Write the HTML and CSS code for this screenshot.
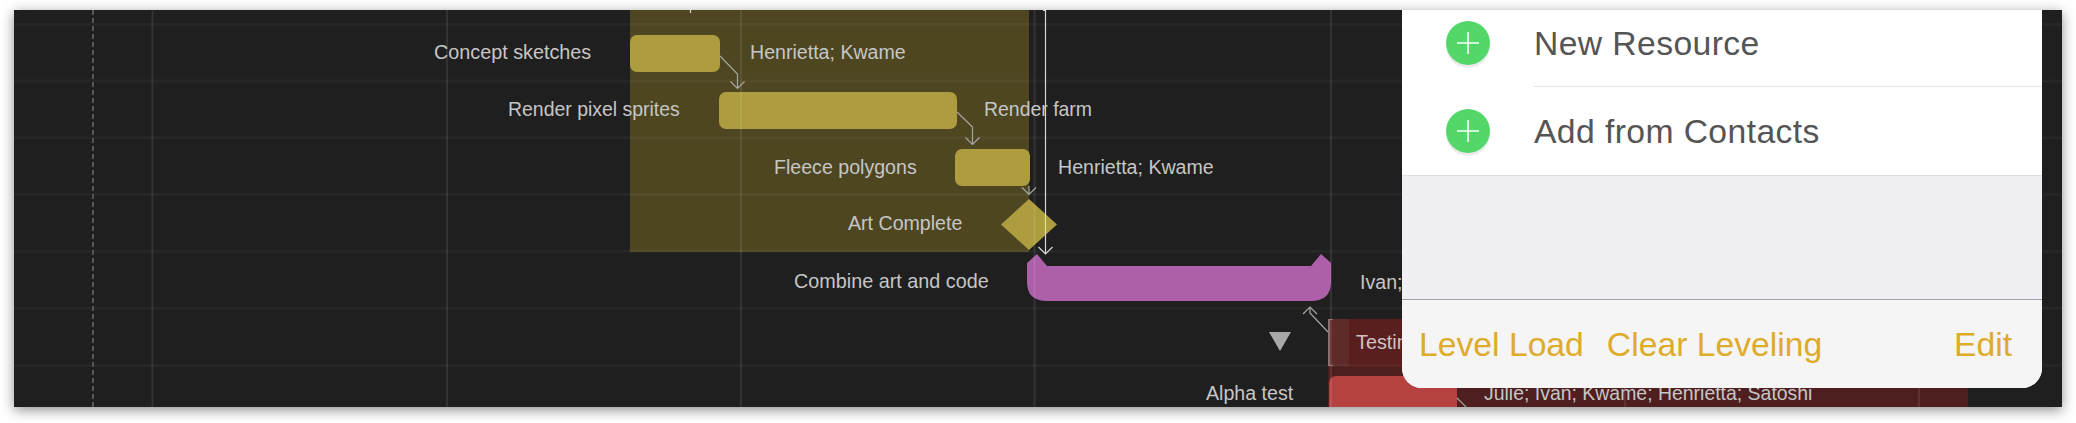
FILE: index.html

```html
<!DOCTYPE html>
<html>
<head>
    <title>Resources</title>
    <link rel="stylesheet" href="styles.css">
</head>
<body>
    <div class="gantt">
        <div class="band"></div>

        <div class="task-row testing-row"></div>
        <div class="bar concept"></div>
        <div class="bar render"></div>
        <div class="bar fleece"></div>
        <div class="bar testing"><span class="testing-cap"></span><span class="testing-text">Testing</span></div>
        <div class="bar alpha"></div>

        <svg class="lines" viewBox="14 10 2048 397" width="2048" height="397">
            <!-- milestone + group shapes -->
            <polygon class="milestone" points="1001,224.5 1029,199 1057,224.5 1029,250"/>
            <path class="group" d="M1027 263 L1037 254 L1047 266 L1311 266 L1321 254 L1331 263 L1331 282 Q1331 301 1311 301 L1047 301 Q1027 301 1027 282 Z"/>
            <polygon class="collapse" points="1269,332 1291,332 1280,351"/>

            <!-- grid -->
            <path class="grid" d="M14 24.5H2062 M14 81H2062 M14 137.8H2062 M14 194.5H2062 M14 251.3H2062 M14 308.3H2062 M14 365.5H2062"/>
            <path class="grid-v" d="M152.5 10V407 M447 10V407 M741 10V407 M1034.5 10V407 M1331 10V407 M1625 10V407 M1919 10V407"/>
            <path class="today" d="M93 10V407"/>

            <!-- dependency arrows -->
            <path class="arrow" d="M720 56 L737.5 74 V88 M730.5 81.5 L737.5 88.5 L744.5 81.5"/>
            <path class="arrow" d="M957 112 L972.5 127 V144 M965.5 137.5 L972.5 144.5 L979.5 137.5"/>
            <path class="arrow" d="M1029 186 V194 M1022 187.5 L1029 194.5 L1036 187.5"/>
            <path class="arrow bright" d="M1043 10.5 H1045.5 V253 M1038.5 247 L1045.5 254 L1052.5 247"/>
            <path class="arrow" d="M1328 332 L1310 313 V307 M1303 314 L1310 307 L1317 314"/>
            <path class="arrow" d="M1457 398 L1470 411"/>
            <path class="arrow bright" d="M690.5 10 V13"/>
        </svg>

        <span class="label lbl-concept">Concept sketches</span>
        <span class="label lbl-concept-who">Henrietta; Kwame</span>
        <span class="label lbl-render">Render pixel sprites</span>
        <span class="label lbl-render-who">Render farm</span>
        <span class="label lbl-fleece">Fleece polygons</span>
        <span class="label lbl-fleece-who">Henrietta; Kwame</span>
        <span class="label lbl-art">Art Complete</span>
        <span class="label lbl-combine">Combine art and code</span>
        <span class="label lbl-combine-who">Ivan; Julie</span>
        <span class="label lbl-alpha">Alpha test</span>
        <span class="label lbl-alpha-who">Julie; Ivan; Kwame; Henrietta; Satoshi</span>

        <div class="popup">
            <ul class="resource-list">
                <li class="resource-item">
                    <span class="add-btn"><svg viewBox="0 0 22 22" width="22" height="22"><path d="M11 0V22M0 11H22"/></svg></span>
                    <span class="resource-name">New Resource</span>
                </li>
                <li class="resource-item">
                    <span class="add-btn"><svg viewBox="0 0 22 22" width="22" height="22"><path d="M11 0V22M0 11H22"/></svg></span>
                    <span class="resource-name">Add from Contacts</span>
                </li>
            </ul>
            <div class="popup-empty"></div>
            <div class="popup-toolbar">
                <a class="tool">Level Load</a>
                <a class="tool">Clear Leveling</a>
                <a class="tool tool-edit">Edit</a>
            </div>
        </div>
    </div>
</body>
</html>
```

FILE: styles.css

```css
html, body {
    margin: 0;
    height: 423px;
    overflow: hidden;
    background-color: #fff;
}

body {
    padding: 10px 14px 0;
    box-sizing: border-box;
    font-family: "Liberation Sans", Arial, sans-serif;
}

/* everything in the chart sits on the time canvas, page coords minus 14/10 */
.gantt {
    position: relative;
    width: 2048px;
    height: 397px;
    overflow: hidden;
    background-color: #1f1f1f;
    box-shadow: 0 3px 12px rgba(0, 0, 0, 0.45);
}

.band {
    position: absolute;
    left: 616px;
    top: 0;
    width: 399px;
    height: 242px;
    background-color: #4d4621;
}

.bar {
    position: absolute;
    height: 37px;
    border-radius: 7px;
    background-color: #ae9d3e;
}

.concept { left: 616px; top: 25px; width: 90px; }
.render { left: 705px; top: 82px; width: 238px; }
.fleece { left: 941px; top: 139px; width: 75px; }

.task-row {
    position: absolute;
    background-color: #4f1e1e;
}

.testing-row {
    left: 1314px;
    top: 356px;
    width: 640px;
    height: 41px;
}

.testing {
    left: 1314px;
    top: 309px;
    width: 500px;
    height: 47px;
    border-radius: 0;
    background-color: #591e1e;
    border-left: 2px solid #8d6f6f;
    box-sizing: border-box;
}

.testing-cap {
    position: absolute;
    left: 0;
    top: 0;
    width: 19px;
    height: 47px;
    background-color: #5f2a2a;
}

.testing-cap::before {
    content: "";
    position: absolute;
    left: 0;
    top: 0;
    width: 3px;
    height: 45px;
    border-top: 1px solid #8d6f6f;
    border-bottom: 1px solid #8d6f6f;
}

.testing-text {
    position: absolute;
    left: 26px;
    top: 11px;
    font-size: 19.8px;
    line-height: 24px;
    color: #cfc4c4;
}

.alpha {
    left: 1315px;
    top: 366px;
    width: 128px;
    height: 48px;
    background-color: #b64141;
}

.lines {
    position: absolute;
    left: 0;
    top: 0;
}

.milestone { fill: #ae9d3e; }
.group { fill: #ad5fa9; }
.collapse { fill: #a8a8a8; }

.grid {
    fill: none;
    stroke: rgba(255, 255, 255, 0.035);
    stroke-width: 3;
}

.grid-v {
    fill: none;
    stroke: rgba(255, 255, 255, 0.09);
    stroke-width: 2;
}

.today {
    fill: none;
    stroke: #555;
    stroke-width: 2;
    stroke-dasharray: 5 3;
}

.arrow {
    fill: none;
    stroke: #a6a6a0;
    stroke-width: 1.2;
}

.arrow.bright {
    stroke: #d8d8d8;
}

.label {
    position: absolute;
    font-size: 19.6px;
    line-height: 24px;
    color: #c6c6c6;
    white-space: nowrap;
}

.lbl-concept { left: 420px; top: 30px; font-size: 19.8px; }
.lbl-concept-who { left: 736px; top: 30px; }
.lbl-render { left: 494px; top: 87px; font-size: 19.45px; }
.lbl-render-who { left: 970px; top: 87px; font-size: 19.45px; }
.lbl-fleece { left: 760px; top: 145px; }
.lbl-fleece-who { left: 1044px; top: 145px; }
.lbl-art { left: 834px; top: 201px; }
.lbl-combine { left: 780px; top: 259px; font-size: 19.8px; }
.lbl-combine-who { left: 1346px; top: 260px; }
.lbl-alpha { left: 1192px; top: 371px; }
.lbl-alpha-who { left: 1470px; top: 371px; font-size: 19.45px; }

/* resources popover */
.popup {
    position: absolute;
    left: 1388px;
    top: 0;
    width: 640px;
    height: 378px;
    display: flex;
    flex-direction: column;
    overflow: hidden;
    border-radius: 0 0 20px 20px;
    background-color: #efeff4;
}

.resource-list {
    list-style: none;
    margin: -11px 0 0;
    padding: 0;
    height: 176px;
    background-color: #fff;
    border-bottom: 1px solid #dfdfe2;
}

.resource-item {
    display: flex;
    align-items: center;
    gap: 44px;
    height: 88px;
    padding-left: 44px;
}

.resource-item:first-child {
    position: relative;
}

.resource-item:first-child::after {
    content: "";
    position: absolute;
    left: 132px;
    right: 0;
    bottom: 0;
    height: 1px;
    background-color: #e4e4e6;
}

.add-btn {
    display: flex;
    align-items: center;
    justify-content: center;
    width: 44px;
    height: 44px;
    border-radius: 50%;
    background-color: #53d769;
    box-shadow: 0 3px 0 #ececec;
}

.add-btn path {
    fill: none;
    stroke: #fff;
    stroke-width: 1.6;
}

.resource-name {
    font-size: 33.7px;
    letter-spacing: 0.4px;
    color: #555;
}

.popup-empty {
    flex: 1;
}

.popup-toolbar {
    display: flex;
    align-items: center;
    gap: 23px;
    height: 88px;
    padding: 0 30px 0 17px;
    background-color: #f5f5f6;
    border-top: 1px solid #a2a2a2;
}

.tool {
    font-size: 33.7px;
    color: #dfab2a;
}

.tool-edit {
    margin-left: auto;
}
```
